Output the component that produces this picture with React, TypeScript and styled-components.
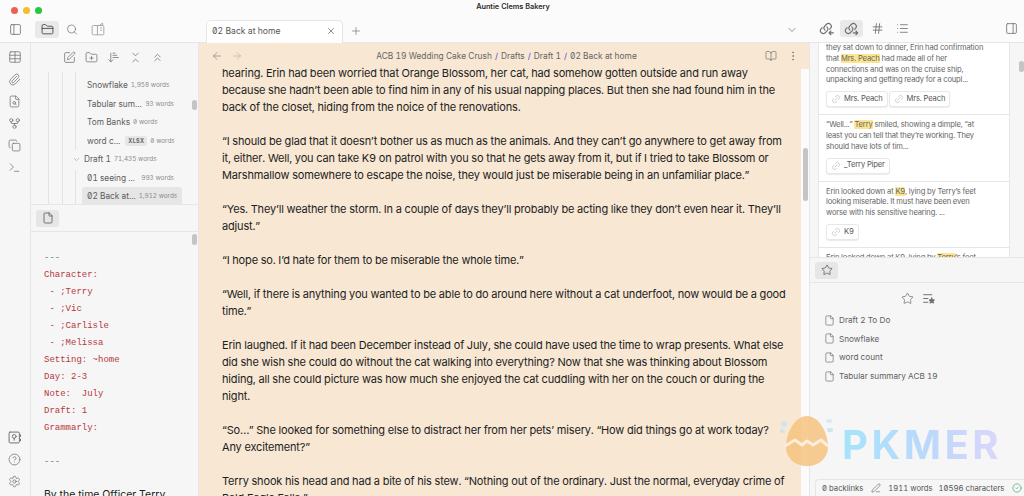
import styled, { createGlobalStyle } from "styled-components";
import {
  ArrowDownNarrowWide,
  ArrowLeft,
  ArrowRight,
  BookOpen,
  ChevronDown,
  ChevronsDownUp,
  ChevronsUp,
  CircleCheck,
  CircleHelp,
  Copy,
  File,
  FileSearch,
  FolderClosed,
  FolderPlus,
  GitFork,
  Hash,
  Link2,
  List,
  MoreVertical,
  PanelLeft,
  PanelRight,
  Paperclip,
  PenLine,
  Plus,
  Search,
  Settings,
  SquarePen,
  Star,
  Table,
  Terminal,
  X,
} from "lucide-react";

const GlobalStyle = createGlobalStyle`
  html, body {
    margin: 0;
    height: 100%;
    overflow: hidden;
    background: #fff;
  }
  #root {
    height: 100%;
  }
  * {
    box-sizing: border-box;
  }
`;

const SANS = `Inter, "Liberation Sans", sans-serif`;

const Window = styled.div`
  position: relative;
  width: 1024px;
  height: 496px;
  overflow: hidden;
  display: flex;
  flex-direction: column;
  font-family: ${SANS};
  font-feature-settings: "zero", "tnum";
  background: #f6f6f6;
`;

const Head = styled.header`
  height: 43px;
  flex: none;
  display: grid;
  grid-template-columns: 199px 610px 215px;
  background: #fbfbfb;
  border-bottom: 1px solid #e6e6e6;
  position: relative;
`;

const AppTitle = styled.div`
  position: absolute;
  top: 1px;
  left: 2px;
  right: 0;
  text-align: center;
  font-size: 7.3px;
  line-height: 11px;
  font-weight: 600;
  color: #2b2b2b;
`;

const HeadLeft = styled.div`
  display: flex;
  flex-direction: column;
`;

const Lights = styled.div`
  height: 20px;
  display: flex;
  align-items: center;
  gap: 5px;
  padding-left: 11px;
`;

const Light = styled.span<{ $color: string }>`
  width: 7px;
  height: 7px;
  border-radius: 50%;
  background: ${({ $color }) => $color};
`;

const HeadTools = styled.div`
  display: flex;
  align-items: center;
  height: 18px;
  padding-left: 6px;
`;

const IconBtn = styled.span<{ $active?: boolean; $w?: number; $ml?: number }>`
  width: ${({ $w }) => $w ?? 18}px;
  height: 17px;
  flex: none;
  margin-left: ${({ $ml }) => $ml ?? 0}px;
  display: inline-flex;
  align-items: center;
  justify-content: center;
  border-radius: 3px;
  color: #6f6f6f;
  background: ${({ $active }) => ($active ? "#e9e9e9" : "transparent")};
`;

const HeadTabs = styled.div`
  display: flex;
  align-items: flex-end;
  padding-left: 7px;
  gap: 7px;
  position: relative;
`;

const Tab = styled.div`
  width: 137px;
  height: 23px;
  background: #fff;
  border: 1px solid #e6e6e6;
  border-bottom: none;
  border-radius: 5px 5px 0 0;
  display: flex;
  align-items: center;
  justify-content: space-between;
  padding: 0 6px 3px 5px;
  font-size: 8.6px;
  color: #555;
  margin-bottom: -1px;
`;

const AddTab = styled.span`
  display: inline-flex;
  color: #808080;
  margin-bottom: 5px;
`;

const TabMenu = styled.span`
  margin-left: auto;
  margin-right: 11px;
  margin-bottom: 6px;
  display: inline-flex;
  color: #777;
`;

const HeadRight = styled.div`
  display: flex;
  align-items: flex-end;
  padding: 0 4px 5px 8px;
  gap: 5px;
`;

const PushRight = styled.span`
  margin-left: auto;
  display: inline-flex;
`;

const Body = styled.div`
  flex: 1;
  min-height: 0;
  display: grid;
  grid-template-columns: 31px 168px 610px 215px;
`;

const Ribbon = styled.nav`
  display: flex;
  flex-direction: column;
  align-items: center;
  padding: 7px 1px 8px 0;
  gap: 8px;
  background: #f6f6f6;
  border-right: 1px solid #e6e6e6;
  color: #707070;
`;

const RibbonIcon = styled.span`
  height: 14px;
  display: inline-flex;
  align-items: center;
  justify-content: center;
`;

const RibbonBottom = styled.div`
  margin-top: auto;
  display: flex;
  flex-direction: column;
  gap: 8px;
`;

const LeftPane = styled.aside`
  display: grid;
  grid-template-rows: 29px 132px 28px 1fr;
  min-height: 0;
  border-right: 1px solid #e6e6e6;
`;

const NavBar = styled.div`
  display: flex;
  justify-content: center;
  align-items: center;
  gap: 9px;
  padding-right: 2px;
  color: #707070;
`;

const Tree = styled.div`
  position: relative;
  overflow: hidden;
  padding: 4px 0 0 17px;
`;

const Guide = styled.span<{ $left: number; $top?: number; $height: number }>`
  position: absolute;
  top: ${({ $top }) => $top ?? 0}px;
  left: ${({ $left }) => $left}px;
  width: 1px;
  height: ${({ $height }) => $height}px;
  background: #e3e3e3;
`;

const TreeRow = styled.div<{ $indent: number; $active?: boolean }>`
  height: 18.5px;
  width: ${({ $active }) => ($active ? "100px" : "auto")};
  margin-left: ${({ $indent, $active }) => $indent - ($active ? 5 : 0)}px;
  padding-left: ${({ $active }) => ($active ? 5 : 0)}px;
  display: flex;
  align-items: center;
  gap: 3px;
  font-size: 8.3px;
  color: #5c5c5c;
  white-space: nowrap;
  border-radius: 3px;
  background: ${({ $active }) => ($active ? "#e6e6e6" : "transparent")};
`;

const Words = styled.span`
  font-size: 6.4px;
  color: #8c8c8c;
  margin-left: auto;
`;

const TreeFold = styled.span`
  display: inline-flex;
  color: #9a9a9a;
  margin-left: -11px;
  width: 9px;
`;

const Badge = styled.span`
  font-size: 5.5px;
  font-weight: 700;
  letter-spacing: 0.3px;
  color: #666;
  background: #e6e6e6;
  border-radius: 2px;
  padding: 2px 3px;
  margin-left: 2px;
`;

const TreeRowInner = styled.span<{ $w: number }>`
  display: flex;
  align-items: center;
  gap: 3px;
  width: ${({ $w }) => $w}px;
`;

const Scroll = styled.span<{ $top: number; $height: number }>`
  position: absolute;
  top: ${({ $top }) => $top}px;
  right: 1px;
  width: 5px;
  height: ${({ $height }) => $height}px;
  border-radius: 3px;
  background: #c4c4c4;
`;

const SmallTabs = styled.div`
  border-top: 1px solid #e6e6e6;
  border-bottom: 1px solid #e6e6e6;
  display: flex;
  align-items: center;
  padding-left: 5px;
`;

const SmallTab = styled.span`
  width: 23px;
  height: 17px;
  border-radius: 3px;
  background: #e6e6e6;
  color: #555;
  display: inline-flex;
  align-items: center;
  justify-content: center;
`;

const Note = styled.div`
  position: relative;
  overflow: hidden;
  padding: 18px 0 0 13px;
  background: #f6f6f6;
`;

const Code = styled.div<{ $muted?: boolean }>`
  height: 17px;
  line-height: 17px;
  font-family: "Liberation Mono", monospace;
  font-size: 9px;
  white-space: pre;
  color: ${({ $muted }) => ($muted ? "#777" : "#b5393c")};
`;

const NoteText = styled.div`
  margin-top: 15px;
  font-size: 10.5px;
  line-height: 17px;
  color: #222;
  white-space: nowrap;
`;

const Editor = styled.main`
  position: relative;
  background: #f7e7d3;
  min-height: 0;
  overflow: hidden;
  display: flex;
  flex-direction: column;
`;

const EditorBar = styled.div`
  height: 26px;
  flex: none;
  display: grid;
  grid-template-columns: 80px 1fr 80px;
  align-items: center;
  padding: 0 10px;
  color: #8a8a8a;
`;

const NavArrows = styled.div`
  display: flex;
  gap: 8px;
  padding-left: 2px;
`;

const Faded = styled.span`
  display: inline-flex;
  opacity: 0.5;
`;

const Crumbs = styled.div`
  text-align: center;
  font-size: 8.4px;
  padding-left: 5px;
  color: #666;
  white-space: nowrap;
`;

const Slash = styled.span`
  color: #4a4ae0;
  margin: 0 3px;
`;

const BarEnd = styled.div`
  display: flex;
  justify-content: flex-end;
  gap: 10px;
  align-items: center;
  color: #777;
`;

const Page = styled.div`
  flex: 1;
  min-height: 0;
  display: grid;
  grid-template-columns: 1fr 8px;
`;

const Prose = styled.div`
  padding-left: 23px;
  margin-top: -4px;
  overflow: hidden;
  font-size: 11px;
  letter-spacing: -0.16px;
  line-height: 17px;
  color: #1d1d1d;
`;

const Para = styled.p`
  margin: 0 0 17px;
`;

const ProseLine = styled.span`
  display: block;
  white-space: nowrap;
`;

const EditorTrack = styled.div`
  position: relative;
  background: #fbfbfb;
`;

const RightPane = styled.aside`
  display: grid;
  grid-template-rows: 214px 26px 1fr;
  min-height: 0;
  background: #f6f6f6;
  border-left: 1px solid #e6e6e6;
`;

const Backlinks = styled.div`
  position: relative;
  overflow: hidden;
  padding-left: 8px;
`;

const CardList = styled.div`
  width: 192px;
  margin-top: -5px;
  background: #fff;
  border-left: 1px solid #e6e6e6;
  border-right: 1px solid #e6e6e6;
`;

const Card = styled.div`
  padding: 5px 7px 7px;
  border-bottom: 1px solid #e6e6e6;
  font-size: 7.6px;
  letter-spacing: -0.16px;
  line-height: 10.8px;
  color: #666;
`;

const CardLine = styled.span`
  display: block;
  white-space: nowrap;
`;

const Mark = styled.mark`
  background: #fde58f;
  color: inherit;
  border-radius: 1px;
`;

const Chips = styled.div`
  display: flex;
  gap: 1px;
  margin-top: 5px;
`;

const Chip = styled.span`
  height: 16px;
  padding: 0 4px;
  display: inline-flex;
  align-items: center;
  gap: 3px;
  background: #fff;
  border: 1px solid #e8e8e8;
  border-radius: 3px;
  box-shadow: 0 1px 1px rgba(0, 0, 0, 0.08);
  font-size: 7.6px;
  color: #555;
  white-space: nowrap;
`;

const ChipIcon = styled.span`
  display: inline-flex;
  color: #bbb;
`;

const Favourites = styled.div`
  padding-top: 9px;
`;

const FavTools = styled.div`
  display: flex;
  justify-content: center;
  gap: 8px;
  color: #6f6f6f;
  padding-left: 1px;
  margin-bottom: 6px;
`;

const FavRow = styled.div`
  height: 18.6px;
  display: flex;
  align-items: center;
  gap: 4px;
  padding-left: 14px;
  font-size: 8.2px;
  color: #5f5f5f;
  white-space: nowrap;
`;

const FavIcon = styled.span`
  display: inline-flex;
  color: #6f6f6f;
`;

const PaneScroll = styled.span`
  position: absolute;
  top: 18px;
  right: 0;
  width: 5px;
  height: 11px;
  border-radius: 3px;
  background: #c4c4c4;
`;

const StatusBar = styled.footer`
  position: absolute;
  right: 0;
  bottom: 0;
  width: 209px;
  height: 17px;
  display: flex;
  align-items: center;
  padding-left: 6px;
  font-size: 7.7px;
  color: #555;
  background: #f6f6f6;
  border: 1px solid #e6e6e6;
  border-right: none;
  border-bottom: none;
  border-radius: 4px 0 0 0;
  white-space: nowrap;
`;

const StatusPen = styled.span`
  display: inline-flex;
  margin: 0 7px 0 8px;
`;

const StatusChars = styled.span`
  margin: 0 8px 0 6px;
  display: inline-flex;
`;

const Watermark = styled.div`
  position: absolute;
  left: 780px;
  top: 415px;
  display: flex;
  align-items: center;
  gap: 8px;
  pointer-events: none;
`;

const Brand = styled.span`
  font-family: ${SANS};
  font-size: 40px;
  line-height: 44px;
  font-weight: 700;
  letter-spacing: 3.5px;
  margin-top: 8px;
  background: linear-gradient(90deg, #a6e3fb 0%, #bcd8fb 55%, #dcd6fb 100%);
  -webkit-background-clip: text;
  background-clip: text;
  color: transparent;
`;

const LinkArrowIcon = ({ dir }: { dir: "in" | "out" }) => (
  <svg width="15" height="15" viewBox="0 0 24 24" fill="none" stroke="currentColor" strokeWidth="1.8" strokeLinecap="round" strokeLinejoin="round">
    <path d="M9.5 14.5a4.5 4.5 0 0 1-.5-6.3l3-3a4.6 4.6 0 0 1 6.5 6.5l-1.5 1.5" />
    <path d="M12.5 9.5a4.5 4.5 0 0 1 .5 6.3l-3 3a4.6 4.6 0 0 1-6.5-6.5L5 10.8" />
    {dir === "in" ? <path d="M23 19h-7M19 16l-3 3 3 3" /> : <path d="M15 19h7M19 16l3 3-3 3" />}
  </svg>
);

const FavSortIcon = () => (
  <svg width="13" height="13" viewBox="0 0 24 24" fill="none" stroke="currentColor" strokeWidth="1.8" strokeLinecap="round" strokeLinejoin="round">
    <path d="M3 5h15M3 12h8M3 19h8" />
    <path d="M18 11l1.6 3.3 3.4.5-2.5 2.4.6 3.4-3.1-1.6-3.1 1.6.6-3.4-2.5-2.4 3.4-.5z" fill="currentColor" />
  </svg>
);

const SwitcherIcon = () => (
  <svg width="14" height="14" viewBox="0 0 24 24" fill="none" stroke="#a8a8a8" strokeWidth="1.7" strokeLinejoin="round">
    <rect x="2" y="6" width="20" height="16" rx="2" />
    <path d="M11 6v16M15 5l5-3v4M16 10h3M16 14h3" />
  </svg>
);

const VaultIcon = () => (
  <svg width="13" height="13" viewBox="0 0 24 24" fill="none" stroke="currentColor" strokeWidth="1.8" strokeLinecap="round" strokeLinejoin="round">
    <rect x="2" y="2" width="19" height="20" rx="2" />
    <circle cx="11.5" cy="10" r="3.5" />
    <path d="M11.5 13.5V17M23 7v3M23 15v3" />
  </svg>
);

const EggLogo = () => (
  <svg width="54" height="52" viewBox="0 0 54 52" fill="none">
    <path d="M27 1C15 1 6 18 6 32c0 11 9 19 21 19s21-8 21-19C48 18 39 1 27 1z" fill="#f5c078" fillOpacity="0.8" />
    <path d="M5 31l10-6 7 5 5-4 6 4 8-5 7 6" stroke="#fbeedd" strokeWidth="3" strokeLinejoin="round" />
    <ellipse cx="4" cy="9" rx="3" ry="2.4" fill="#cfe3f3" />
    <ellipse cx="2.5" cy="16" rx="2.6" ry="2" fill="#cfe3f3" />
    <ellipse cx="49" cy="6" rx="3" ry="2" fill="#dbe9f6" />
    <ellipse cx="50" cy="15" rx="3" ry="2" fill="#cfe3f3" />
  </svg>
);

const noteLines = [
  "Character:",
  " - ;Terry",
  " - ;Vic",
  " - ;Carlisle",
  " - ;Melissa",
  "Setting: ~home",
  "Day: 2-3",
  "Note:  July",
  "Draft: 1",
  "Grammarly:",
];

const prose = [
  [
    "hearing. Erin had been worried that Orange Blossom, her cat, had somehow gotten outside and run away",
    "because she hadn’t been able to find him in any of his usual napping places. But then she had found him in the",
    "back of the closet, hiding from the noice of the renovations.",
  ],
  [
    "“I should be glad that it doesn’t bother us as much as the animals. And they can’t go anywhere to get away from",
    "it, either. Well, you can take K9 on patrol with you so that he gets away from it, but if I tried to take Blossom or",
    "Marshmallow somewhere to escape the noise, they would just be miserable being in an unfamiliar place.”",
  ],
  [
    "“Yes. They’ll weather the storm. In a couple of days they’ll probably be acting like they don’t even hear it. They’ll",
    "adjust.”",
  ],
  ["“I hope so. I’d hate for them to be miserable the whole time.”"],
  [
    "“Well, if there is anything you wanted to be able to do around here without a cat underfoot, now would be a good",
    "time.”",
  ],
  [
    "Erin laughed. If it had been December instead of July, she could have used the time to wrap presents. What else",
    "did she wish she could do without the cat walking into everything? Now that she was thinking about Blossom",
    "hiding, all she could picture was how much she enjoyed the cat cuddling with her on the couch or during the",
    "night.",
  ],
  [
    "“So…” She looked for something else to distract her from her pets’ misery. “How did things go at work today?",
    "Any excitement?”",
  ],
  [
    "Terry shook his head and had a bite of his stew. “Nothing out of the ordinary. Just the normal, everyday crime of",
    "Bald Eagle Falls.”",
  ],
];

const favourites = ["Draft 2 To Do", "Snowflake", "word count", "Tabular summary ACB 19"];

const ChipLink = ({ label }: { label: string }) => (
  <Chip>
    <ChipIcon>
      <Link2 size={10} strokeWidth={1.5} style={{ transform: "rotate(-45deg)" }} />
    </ChipIcon>
    {label}
  </Chip>
);

export default function App() {
  return (
    <Window>
      <GlobalStyle />
      <Head>
        <AppTitle>Auntie Clems Bakery</AppTitle>
        <HeadLeft>
          <Lights>
            <Light $color="#ee5f57" />
            <Light $color="#f5bd2f" />
            <Light $color="#29c640" />
          </Lights>
          <HeadTools>
            <IconBtn>
              <PanelLeft size={13} strokeWidth={1.5} />
            </IconBtn>
            <IconBtn $active $w={24} $ml={11}>
              <FolderClosed size={13} strokeWidth={1.6} color="#444" />
            </IconBtn>
            <IconBtn $w={12} $ml={7}>
              <Search size={13} strokeWidth={1.4} />
            </IconBtn>
            <IconBtn $ml={11}>
              <SwitcherIcon />
            </IconBtn>
          </HeadTools>
        </HeadLeft>
        <HeadTabs>
          <Tab>
            <span>02 Back at home</span>
            <X size={10} strokeWidth={1.6} />
          </Tab>
          <AddTab>
            <Plus size={12} strokeWidth={1.5} />
          </AddTab>
          <TabMenu>
            <ChevronDown size={12} strokeWidth={1.6} />
          </TabMenu>
        </HeadTabs>
        <HeadRight>
          <IconBtn>
            <LinkArrowIcon dir="in" />
          </IconBtn>
          <IconBtn $active $w={23}>
            <LinkArrowIcon dir="out" />
          </IconBtn>
          <IconBtn>
            <Hash size={13} strokeWidth={1.6} />
          </IconBtn>
          <IconBtn $ml={2}>
            <List size={13} strokeWidth={1.5} />
          </IconBtn>
          <PushRight>
            <IconBtn>
              <PanelRight size={13} strokeWidth={1.5} />
            </IconBtn>
          </PushRight>
        </HeadRight>
      </Head>

      <Body>
        <Ribbon>
          <RibbonIcon>
            <Table size={14} strokeWidth={1.3} />
          </RibbonIcon>
          <RibbonIcon>
            <Paperclip size={13} strokeWidth={1.4} />
          </RibbonIcon>
          <RibbonIcon>
            <FileSearch size={13} strokeWidth={1.4} />
          </RibbonIcon>
          <RibbonIcon>
            <GitFork size={13} strokeWidth={1.4} />
          </RibbonIcon>
          <RibbonIcon>
            <Copy size={13} strokeWidth={1.4} />
          </RibbonIcon>
          <RibbonIcon>
            <Terminal size={13} strokeWidth={1.4} />
          </RibbonIcon>
          <RibbonBottom>
            <RibbonIcon>
              <VaultIcon />
            </RibbonIcon>
            <RibbonIcon>
              <CircleHelp size={13} strokeWidth={1.4} />
            </RibbonIcon>
            <RibbonIcon>
              <Settings size={13} strokeWidth={1.4} />
            </RibbonIcon>
          </RibbonBottom>
        </Ribbon>

        <LeftPane>
          <NavBar>
            <SquarePen size={13} strokeWidth={1.4} />
            <FolderPlus size={13} strokeWidth={1.4} />
            <ArrowDownNarrowWide size={13} strokeWidth={1.4} />
            <ChevronsDownUp size={13} strokeWidth={1.4} />
            <ChevronsUp size={13} strokeWidth={1.4} />
          </NavBar>
          <Tree>
            <Guide $left={17} $height={132} />
            <Guide $left={31} $height={132} />
            <Guide $left={44} $height={78} />
            <Guide $left={44} $top={98} $height={34} />
            <TreeRow $indent={39}>
              <TreeRowInner $w={80}>
                Snowflake <Words>1,958 words</Words>
              </TreeRowInner>
            </TreeRow>
            <TreeRow $indent={39}>
              <TreeRowInner $w={87}>
                Tabular sum... <Words>93 words</Words>
              </TreeRowInner>
            </TreeRow>
            <TreeRow $indent={39}>
              <TreeRowInner $w={70}>
                Tom Banks <Words>0 words</Words>
              </TreeRowInner>
            </TreeRow>
            <TreeRow $indent={39}>
              <TreeRowInner $w={87}>
                word c... <Badge>XLSX</Badge> <Words>0 words</Words>
              </TreeRowInner>
            </TreeRow>
            <TreeRow $indent={35}>
              <TreeFold>
                <ChevronDown size={9} strokeWidth={1.6} />
              </TreeFold>
              <TreeRowInner $w={70}>
                Draft 1 <Words>71,435 words</Words>
              </TreeRowInner>
            </TreeRow>
            <TreeRow $indent={39}>
              <TreeRowInner $w={87}>
                01 seeing ... <Words>993 words</Words>
              </TreeRowInner>
            </TreeRow>
            <TreeRow $indent={39} $active>
              <TreeRowInner $w={87}>
                02 Back at... <Words>1,912 words</Words>
              </TreeRowInner>
            </TreeRow>
            <Scroll $top={28} $height={10} />
          </Tree>
          <SmallTabs>
            <SmallTab>
              <File size={12} strokeWidth={1.6} />
            </SmallTab>
          </SmallTabs>
          <Note>
            <Code $muted>---</Code>
            {noteLines.map((line) => (
              <Code key={line}>{line}</Code>
            ))}
            <Code> </Code>
            <Code $muted>---</Code>
            <NoteText>By the time Officer Terry</NoteText>
            <Scroll $top={2} $height={11} />
          </Note>
        </LeftPane>

        <Editor>
          <EditorBar>
            <NavArrows>
              <ArrowLeft size={12} strokeWidth={1.5} />
              <Faded>
                <ArrowRight size={12} strokeWidth={1.5} />
              </Faded>
            </NavArrows>
            <Crumbs>
              ACB 19 Wedding Cake Crush<Slash>/</Slash>Drafts<Slash>/</Slash>Draft 1<Slash>/</Slash>02 Back at home
            </Crumbs>
            <BarEnd>
              <BookOpen size={12} strokeWidth={1.4} />
              <MoreVertical size={12} strokeWidth={1.6} />
            </BarEnd>
          </EditorBar>
          <Page>
            <Prose>
              {prose.map((para) => (
                <Para key={para[0]}>
                  {para.map((line) => (
                    <ProseLine key={line}>{line}</ProseLine>
                  ))}
                </Para>
              ))}
            </Prose>
            <EditorTrack>
              <Scroll $top={79} $height={53} />
            </EditorTrack>
          </Page>
        </Editor>

        <RightPane>
          <Backlinks>
            <CardList>
              <Card>
                <CardLine>they sat down to dinner, Erin had confirmation</CardLine>
                <CardLine>
                  that <Mark>Mrs. Peach</Mark> had made all of her
                </CardLine>
                <CardLine>connections and was on the cruise ship,</CardLine>
                <CardLine>unpacking and getting ready for a coupl...</CardLine>
                <Chips>
                  <ChipLink label="Mrs. Peach" />
                  <ChipLink label="Mrs. Peach" />
                </Chips>
              </Card>
              <Card>
                <CardLine>
                  “Well...” <Mark>Terry</Mark> smiled, showing a dimple, “at
                </CardLine>
                <CardLine>least you can tell that they’re working. They</CardLine>
                <CardLine>should have lots of tim...</CardLine>
                <Chips>
                  <ChipLink label="_Terry Piper" />
                </Chips>
              </Card>
              <Card>
                <CardLine>
                  Erin looked down at <Mark>K9</Mark>, lying by Terry’s feet
                </CardLine>
                <CardLine>looking miserable. It must have been even</CardLine>
                <CardLine>worse with his sensitive hearing. ...</CardLine>
                <Chips>
                  <ChipLink label="K9" />
                </Chips>
              </Card>
              <Card>
                <CardLine>
                  Erin looked down at K9, lying by <Mark>Terry</Mark>’s feet
                </CardLine>
              </Card>
            </CardList>
            <PaneScroll />
          </Backlinks>
          <SmallTabs>
            <SmallTab>
              <Star size={12} strokeWidth={1.5} />
            </SmallTab>
          </SmallTabs>
          <Favourites>
            <FavTools>
              <Star size={13} strokeWidth={1.4} />
              <FavSortIcon />
            </FavTools>
            {favourites.map((name) => (
              <FavRow key={name}>
                <FavIcon>
                  <File size={11} strokeWidth={1.5} />
                </FavIcon>
                {name}
              </FavRow>
            ))}
          </Favourites>
        </RightPane>
      </Body>

      <Watermark>
        <EggLogo />
        <Brand>PKMER</Brand>
      </Watermark>

      <StatusBar>
        <span>0 backlinks</span>
        <StatusPen>
          <PenLine size={10} strokeWidth={1.4} />
        </StatusPen>
        <span>1911 words</span>
        <StatusChars>10596 characters</StatusChars>
        <CircleCheck size={10} strokeWidth={1.6} color="#3aa76d" />
      </StatusBar>
    </Window>
  );
}
